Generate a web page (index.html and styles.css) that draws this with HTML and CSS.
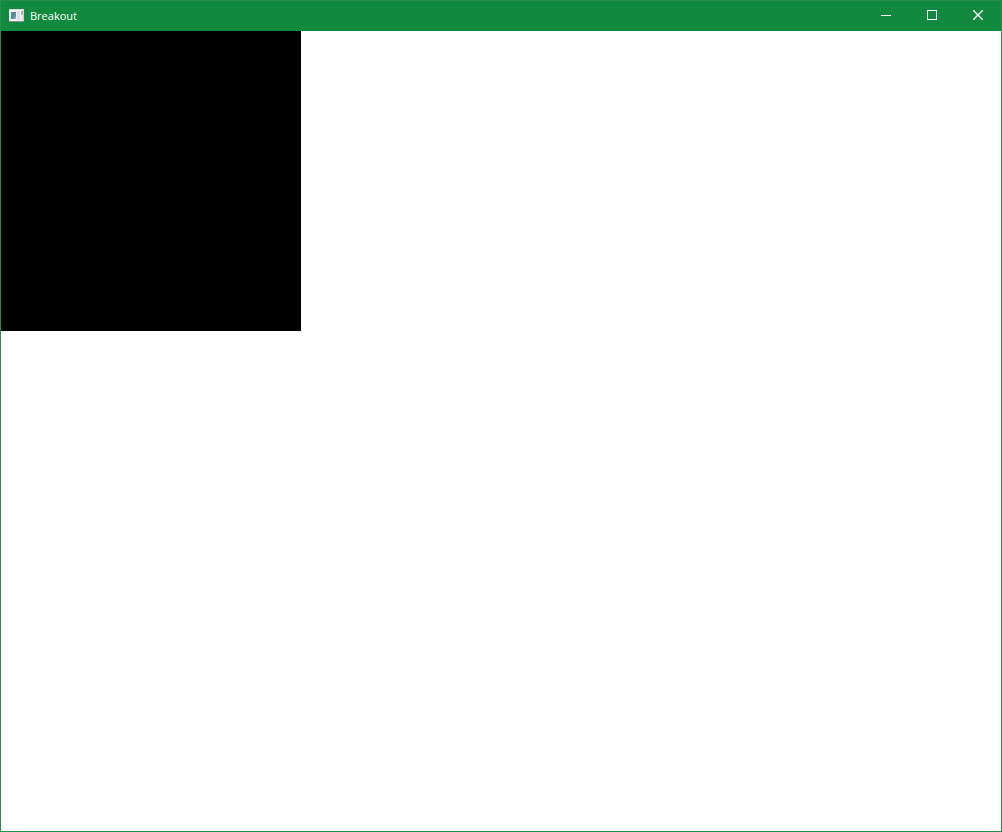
FILE: index.html
```html
<!DOCTYPE html>
<html lang="en">
<head>
    <meta charset="UTF-8">
    <meta name="viewport" content="width=device-width, initial-scale=1.0">
    <title>Breakout</title>
    <link rel="stylesheet" href="styles.css">
</head>
<body>

<div class="window">
    <header class="title-bar">
        <svg class="app-icon" width="16" height="14" viewBox="0 0 16 14" shape-rendering="crispEdges" aria-hidden="true">
            <defs>
                <linearGradient id="pane" x1="0" y1="0" x2="1" y2="1">
                    <stop offset="0" stop-color="#5f86b8"/>
                    <stop offset=".5" stop-color="#4b8f92"/>
                    <stop offset="1" stop-color="#8fb0c4"/>
                </linearGradient>
            </defs>
            <rect x="0" y="0" width="15" height="13" fill="#8a8f8c"/>
            <rect x="0" y="0" width="15" height="12" fill="#f4f1f3"/>
            <rect x="0" y="0" width="15" height="1" fill="#d9d4d8"/>
            <rect x="14" y="1" width="1" height="11" fill="#d3cdd2"/>
            <rect x="2" y="3" width="5" height="7" fill="url(#pane)"/>
            <rect x="8" y="2" width="3" height="9" fill="#dde0ea"/>
            <rect x="12" y="2" width="2" height="4" fill="#9fb4bd"/>
            <rect x="12" y="7" width="2" height="4" fill="#e6e7ec"/>
        </svg>
        <h1 class="title">Breakout</h1>
        <div class="controls">
            <button type="button" class="control" aria-label="Minimize">
                <svg width="10" height="10" viewBox="0 0 10 10" shape-rendering="crispEdges"><rect y="5" width="10" height="1" fill="#fff"/></svg>
            </button>
            <button type="button" class="control" aria-label="Maximize">
                <svg width="10" height="10" viewBox="0 0 10 10" shape-rendering="crispEdges"><rect x=".5" y=".5" width="9" height="9" fill="none" stroke="#fff"/></svg>
            </button>
            <button type="button" class="control" aria-label="Close">
                <svg width="10" height="10" viewBox="0 0 10 10"><path d="M.2 .2 9.8 9.8M9.8 .2 .2 9.8" stroke="#fff" stroke-width="1.4"/></svg>
            </button>
        </div>
    </header>
    <main class="content">
        <canvas class="game" id="game" width="300" height="300"></canvas>
    </main>
</div>

</body>
</html>
```
FILE: styles.css
```css
* {
    box-sizing: border-box;
}
body {
    margin: 0;
    font-family: "Open Sans", "Noto Sans", sans-serif;
}
.window {
    display: flex;
    flex-direction: column;
    min-height: 100vh;
    border: 1px solid #268e4c;
    background: #fff;
}
.title-bar {
    display: flex;
    align-items: center;
    height: 30px;
    padding-left: 8px;
    background: #11893e;
    color: #fff;
}
.app-icon {
    margin-right: 5px;
}
.title {
    flex: 1;
    margin: 0;
    font-size: 11px;
    font-weight: normal;
    line-height: 30px;
}
.controls {
    display: flex;
    height: 100%;
}
.control {
    display: flex;
    align-items: center;
    justify-content: center;
    width: 46px;
    padding: 0 0 2px;
    border: 0;
    background: transparent;
}
.control:hover {
    background: #2b9a54;
}
.content {
    flex: 1;
}
.game {
    display: block;
    background: #000;
}
```
